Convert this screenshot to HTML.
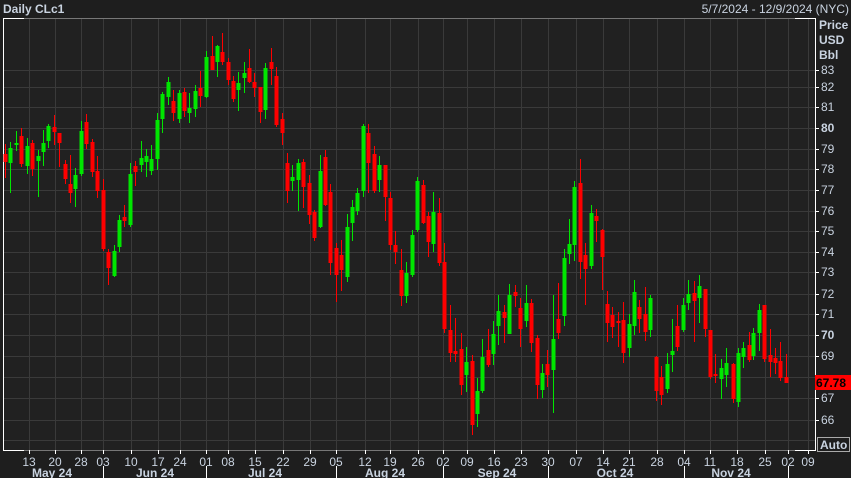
<!DOCTYPE html>
<html><head><meta charset="utf-8"><style>
html,body{margin:0;padding:0;background:#1e1e1e;width:851px;height:478px;overflow:hidden}
svg{display:block}
text{font-family:"Liberation Sans",sans-serif;fill:#c9d3e0}
</style></head><body>
<svg width="851" height="478" viewBox="0 0 851 478" xmlns="http://www.w3.org/2000/svg">
<rect width="851" height="478" fill="#1e1e1e"/>
<rect x="3" y="18" width="812" height="432" fill="#212121"/>
<g stroke="#3a3a3a" stroke-width="1" shape-rendering="crispEdges">
<path d="M3 70.5H815M3 87.5H815M3 107.5H815M3 128.5H815M3 149.5H815M3 169.5H815M3 190.5H815M3 211.5H815M3 231.5H815M3 252.5H815M3 272.5H815M3 294.5H815M3 314.5H815M3 335.5H815M3 356.5H815M3 377.5H815M3 398.5H815M3 420.5H815M3 440.5H815"/>
<path d="M29.5 18V450M55.5 18V450M81.5 18V450M103.5 18V450M131.5 18V450M158.5 18V450M180.5 18V450M206.5 18V450M228.5 18V450M255.5 18V450M283.5 18V450M310.5 18V450M336.5 18V450M365.5 18V450M390.5 18V450M418.5 18V450M443.5 18V450M467.5 18V450M494.5 18V450M521.5 18V450M548.5 18V450M576.5 18V450M603.5 18V450M629.5 18V450M657.5 18V450M684.5 18V450M710.5 18V450M737.5 18V450M765.5 18V450M788.5 18V450M808.5 18V450"/>
</g>
<g stroke="#777" stroke-width="1" shape-rendering="crispEdges"><path d="M3 18.5H815M3 450.5H815"/></g>
<g stroke="#fff" stroke-width="1" shape-rendering="crispEdges" fill="none">
<path d="M24 18.5H3.5V450.5H24M795 18.5H815.5V450.5H795"/>
<path d="M815 70.5h4M815 87.5h4M815 107.5h4M815 128.5h4M815 149.5h4M815 169.5h4M815 190.5h4M815 211.5h4M815 231.5h4M815 252.5h4M815 272.5h4M815 294.5h4M815 314.5h4M815 335.5h4M815 356.5h4M815 398.5h4M815 420.5h4"/>
<path d="M29.5 450V454M55.5 450V454M81.5 450V454M103.5 450V454M131.5 450V454M158.5 450V454M180.5 450V454M206.5 450V454M228.5 450V454M255.5 450V454M283.5 450V454M310.5 450V454M336.5 450V454M365.5 450V454M390.5 450V454M418.5 450V454M443.5 450V454M467.5 450V454M494.5 450V454M521.5 450V454M548.5 450V454M576.5 450V454M603.5 450V454M629.5 450V454M657.5 450V454M684.5 450V454M710.5 450V454M737.5 450V454M765.5 450V454M788.5 450V454M808.5 450V454"/>
<path d="M103.5 466V478M206.5 466V478M336.5 466V478M443.5 466V478M548.5 466V478M684.5 466V478M788.5 466V478"/>
</g>
<g stroke="#ff0000" fill="none">
<path stroke-width="1" d="M5.5 144V178M21.5 128V167M32.5 140V176M54.5 115V145M59.5 133V167M65.5 160V184M70.5 155V203M86.5 114V149M92.5 139V177M97.5 156V198M103.5 179V251M108.5 249V285M124.5 205V227M135.5 161V186M173.5 90V121M184.5 88V117M200.5 71V107M212.5 36V70M222.5 33V65M228.5 58V85M233.5 76V102M249.5 49V83M254.5 73V97M260.5 87V123M271.5 48V85M276.5 67V127M282.5 113V145M287.5 153V203M303.5 159V208M309.5 175V224M314.5 210V241M325.5 150V206M330.5 184V275M336.5 243V302M341.5 240V291M368.5 124V193M374.5 146V193M385.5 165V221M390.5 192V250M395.5 231V264M401.5 249V306M423.5 180V224M428.5 212V257M439.5 198V266M444.5 243V333M450.5 305V362M455.5 318V362M461.5 333V395M472.5 355V435M488.5 329V367M504.5 305V343M515.5 285V307M520.5 298V347M531.5 299V352M537.5 335V399M547.5 350V387M558.5 283V339M580.5 159V279M585.5 243V305M596.5 209V242M602.5 229V290M607.5 291V342M612.5 307V338M618.5 312V347M623.5 302V363M639.5 300V333M645.5 287V341M656.5 356V401M661.5 366V405M677.5 305V351M694.5 281V342M705.5 289V337M710.5 330V379M715.5 354V383M733.5 363V403M749.5 332V362M764.5 305V362M770.5 329V377M775.5 348V374M780.5 342V381M786.5 354V383"/>
<path stroke-width="4" d="M5.5 154V162M21.5 136V164M32.5 143V169M54.5 127V132M59.5 133V143M65.5 164V179M70.5 184V193M86.5 122V144M92.5 142V172M97.5 171V191M103.5 190V249M108.5 252V268M124.5 217V221M135.5 166V172M173.5 101V113M184.5 92V111M200.5 88V96M212.5 56V70M222.5 52V62M228.5 62V80M233.5 81V99M249.5 68V82M254.5 82V88M260.5 87V112M271.5 62V69M276.5 76V125M282.5 119V133M287.5 163V191M303.5 162V187M309.5 183V215M314.5 212V238M325.5 157V205M330.5 192V263M336.5 248V275M341.5 255V270M368.5 133V163M374.5 154V191M385.5 165V197M390.5 198V245M395.5 245V252M401.5 270V296M423.5 185V223M428.5 216V242M439.5 213V263M444.5 262V329M450.5 330V353M455.5 351V354M461.5 349V385M472.5 361V425M488.5 350V365M504.5 312V318M515.5 292V296M520.5 308V329M531.5 303V343M537.5 338V385M547.5 364V375M558.5 319V333M580.5 183V262M585.5 255V269M596.5 216V221M602.5 230V257M607.5 304V323M612.5 315V327M618.5 321V323M623.5 320V353M639.5 307V319M645.5 314V332M656.5 357V391M661.5 377V395M677.5 326V347M694.5 293V301M705.5 289V329M710.5 330V377M715.5 374V376M733.5 364V399M749.5 345V360M764.5 305V359M770.5 355V362M775.5 358V363M780.5 361V378M786.5 377V383"/>
</g>
<g stroke="#00e600" fill="none">
<path stroke-width="1" d="M10.5 142V193M16.5 131V151M27.5 138V174M38.5 150V197M43.5 130V166M48.5 124V148M75.5 168V207M81.5 121V176M114.5 245V277M119.5 215V252M130.5 163V227M141.5 141V172M146.5 149V177M151.5 145V175M157.5 113V170M162.5 92V133M168.5 77V105M179.5 90V123M189.5 93V123M195.5 85V117M206.5 51V98M217.5 45V77M238.5 72V111M244.5 62V93M265.5 63V119M292.5 165V191M298.5 159V211M320.5 155V228M347.5 214V282M352.5 200V241M357.5 188V215M363.5 124V197M379.5 156V192M406.5 262V303M412.5 230V277M417.5 177V232M433.5 192V252M466.5 347V392M477.5 378V427M482.5 339V393M493.5 321V365M498.5 295V345M509.5 284V334M526.5 285V327M542.5 364V398M553.5 295V413M564.5 249V326M569.5 219V264M574.5 181V261M591.5 205V269M629.5 314V357M634.5 280V335M650.5 295V337M667.5 353V393M672.5 319V372M683.5 298V332M688.5 280V310M699.5 275V323M721.5 359V399M726.5 348V387M738.5 348V407M743.5 342V368M753.5 328V360M759.5 304V351"/>
<path stroke-width="4" d="M10.5 148V163M16.5 143V145M27.5 146V166M38.5 156V161M43.5 143V152M48.5 126V141M75.5 175V189M81.5 131V174M114.5 251V276M119.5 220V247M130.5 174V225M141.5 158V165M146.5 156V162M151.5 159V171M157.5 120V159M162.5 94V119M168.5 82V97M179.5 93V119M189.5 108V113M195.5 91V109M206.5 57V97M217.5 46V62M238.5 83V90M244.5 73V78M265.5 68V110M292.5 177V181M298.5 163V180M320.5 171V227M347.5 227V277M352.5 207V223M357.5 193V211M363.5 126V191M379.5 165V180M406.5 273V296M412.5 235V275M417.5 181V230M433.5 212V244M466.5 362V375M477.5 391V414M482.5 357V391M493.5 334V354M498.5 311V326M509.5 295V334M526.5 303V321M542.5 373V390M553.5 339V370M564.5 258V316M569.5 244V254M574.5 187V245M591.5 213V266M629.5 324V348M634.5 292V326M650.5 298V330M667.5 364V389M672.5 351V355M683.5 305V330M688.5 294V303M699.5 286V298M721.5 368V379M726.5 363V375M738.5 353V402M743.5 348V357M753.5 333V356M759.5 310V333"/>
</g>
<text x="3" y="13" font-size="12" font-weight="bold">Daily CLc1</text>
<text x="849" y="13" font-size="12" text-anchor="end">5/7/2024 - 12/9/2024 (NYC)</text>
<g font-size="12">
<text x="819" y="29" font-weight="bold">Price</text>
<text x="819" y="44" font-weight="bold">USD</text>
<text x="819" y="59" font-weight="bold">Bbl</text>
<text x="821" y="74">83</text>
<text x="821" y="91">82</text>
<text x="821" y="111">81</text>
<text x="821" y="132" font-weight="bold">80</text>
<text x="821" y="153">79</text>
<text x="821" y="173">78</text>
<text x="821" y="194">77</text>
<text x="821" y="215">76</text>
<text x="821" y="235">75</text>
<text x="821" y="256">74</text>
<text x="821" y="276">73</text>
<text x="821" y="298">72</text>
<text x="821" y="318">71</text>
<text x="821" y="339" font-weight="bold">70</text>
<text x="821" y="360">69</text>
<text x="821" y="402">67</text>
<text x="821" y="424">66</text>
</g>
<rect x="815" y="375" width="36" height="15" fill="#ff0000"/>
<text x="816" y="387" font-size="12" font-weight="bold" style="fill:#000">67.78</text>
<rect x="817.5" y="437.5" width="32" height="14" fill="none" stroke="#aaa"/>
<text x="820" y="449" font-size="12" font-weight="bold">Auto</text>
<g font-size="12" text-anchor="middle">
<text x="29" y="466">13</text><text x="55" y="466">20</text><text x="81" y="466">28</text><text x="103" y="466">03</text><text x="131" y="466">10</text><text x="158" y="466">17</text><text x="180" y="466">24</text><text x="206" y="466">01</text><text x="228" y="466">08</text><text x="255" y="466">15</text><text x="283" y="466">22</text><text x="310" y="466">29</text><text x="336" y="466">05</text><text x="365" y="466">12</text><text x="390" y="466">19</text><text x="418" y="466">26</text><text x="443" y="466">02</text><text x="467" y="466">09</text><text x="494" y="466">16</text><text x="521" y="466">23</text><text x="548" y="466">30</text><text x="576" y="466">07</text><text x="603" y="466">14</text><text x="629" y="466">21</text><text x="657" y="466">28</text><text x="684" y="466">04</text><text x="710" y="466">11</text><text x="737" y="466">18</text><text x="765" y="466">25</text><text x="788" y="466">02</text><text x="808" y="466">09</text>
</g>
<g font-size="12" font-weight="bold" text-anchor="middle">
<text x="52" y="477">May 24</text><text x="155" y="477">Jun 24</text><text x="265" y="477">Jul 24</text><text x="385" y="477">Aug 24</text><text x="497" y="477">Sep 24</text><text x="615" y="477">Oct 24</text><text x="731" y="477">Nov 24</text>
</g>
</svg>
</body></html>
